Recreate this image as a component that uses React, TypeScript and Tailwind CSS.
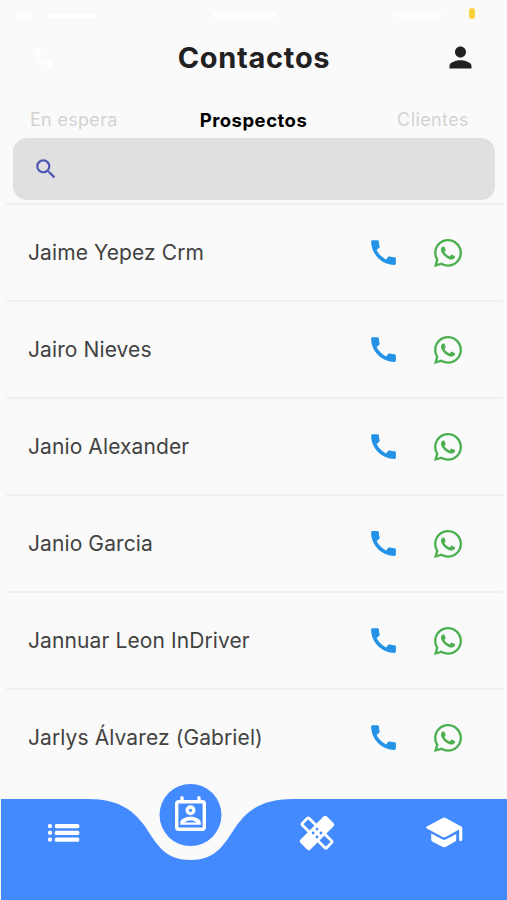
import { MdCall, MdPerson, MdSearch } from "react-icons/md";
import { FaWhatsapp } from "react-icons/fa";

const contacts = [
  "Jaime Yepez Crm",
  "Jairo Nieves",
  "Janio Alexander",
  "Janio Garcia",
  "Jannuar Leon InDriver",
  "Jarlys Álvarez (Gabriel)",
];

function StatusBar() {
  return (
    <div className="flex h-7 items-start justify-between pl-4 pr-8 pt-[8px]">
      <div className="flex items-center gap-4 pt-1">
        <div className="h-2 w-4 rounded-sm bg-white" />
        <div className="h-1 w-12 rounded-sm bg-white" />
      </div>
      <div className="mt-[5px] h-1 w-16 rounded-sm bg-white" />
      <div className="flex gap-7">
        <div className="mt-[5px] h-1 w-12 rounded-sm bg-white" />
        <div className="h-[11px] w-[6px] rounded-[3px] bg-[#f5d23c]" />
      </div>
    </div>
  );
}

function Header() {
  return (
    <header className="grid h-[59px] grid-cols-[1fr_auto_1fr] items-center">
      <MdCall size={24} className="ml-[32px] text-white" />
      <h1 className="pl-[1px] text-[29px] font-bold leading-none tracking-[0.7px] text-[#212121]">
        Contactos
      </h1>
      <MdPerson size={33} className="mr-[30px] justify-self-end text-[#212121]" />
    </header>
  );
}

function Tabs() {
  return (
    <div className="grid h-[51px] grid-cols-[1fr_auto_1fr] items-end pb-[6px] pl-[30px] pr-[38px] text-[18px] leading-6 text-[#d3d3d3]">
      <button className="text-left tracking-[0.3px]">En espera</button>
      <button className="pl-[8px] text-[18.5px] font-bold tracking-[0.5px] text-black">
        Prospectos
      </button>
      <button className="text-right tracking-[0.4px]">Clientes</button>
    </div>
  );
}

function ContactRow({ name }: { name: string }) {
  return (
    <li className="flex h-[97px] items-center border-t-2 border-[#f0f0f0] pl-[22px] pr-[39px]">
      <span className="flex-1 whitespace-nowrap text-[21px] tracking-[0.1px] text-[#424242]">
        {name}
      </span>
      <MdCall size={33} className="mr-8 text-[#2492e6]" />
      <FaWhatsapp size={32} className="text-[#4caf50]" />
    </li>
  );
}

function ListIcon() {
  return (
    <svg width="32" height="20" viewBox="0 0 32 20" fill="currentColor">
      <rect x="0" y="1" width="4" height="4" rx="1.5" />
      <rect x="0" y="7.8" width="4" height="4" rx="1.5" />
      <rect x="0" y="14.5" width="4" height="4" rx="1.5" />
      <rect x="6.8" y="1" width="24.5" height="4.3" rx="1.5" />
      <rect x="6.8" y="7.8" width="24.5" height="4.3" rx="1.5" />
      <rect x="6.8" y="14.5" width="24.5" height="4.3" rx="1.5" />
    </svg>
  );
}

function ContactsIcon() {
  return (
    <svg width="31" height="35" viewBox="0 0 31 35" fill="none" stroke="currentColor">
      <rect x="1.7" y="5.7" width="27.6" height="27.6" rx="2" strokeWidth="3.4" />
      <path d="M7 1.7V5M24 1.7V5" strokeWidth="3.4" strokeLinecap="round" />
      <circle cx="15.5" cy="14.3" r="3.3" strokeWidth="3.4" />
      <path
        d="M5.2 28.8V27C5.2 23.2 10 20.8 15.5 20.8S25.8 23.2 25.8 27V28.8Z"
        fill="currentColor"
        stroke="none"
      />
      <path d="M10 26.4C12 24 19 24 21 26.4Z" fill="#448aff" stroke="none" />
    </svg>
  );
}

function HealingIcon() {
  return (
    <svg width="36" height="36" viewBox="-18 -18 36 36">
      <g transform="rotate(45)">
        <rect
          x="-17.2"
          y="-4.8"
          width="34.4"
          height="9.6"
          rx="1.2"
          fill="none"
          stroke="currentColor"
          strokeWidth="2.8"
        />
        <rect x="-7" y="-18.6" width="14" height="37.2" rx="2.4" fill="currentColor" />
      </g>
      <g fill="#448aff">
        <circle cx="0" cy="-3.9" r="1.4" />
        <circle cx="0" cy="3.9" r="1.4" />
        <circle cx="-3.9" cy="0" r="1.4" />
        <circle cx="3.9" cy="0" r="1.4" />
      </g>
    </svg>
  );
}

function SchoolIcon() {
  return (
    <svg width="37" height="32" viewBox="0 0 37 32" fill="currentColor">
      <path d="M.9 9.5 16.7 1Q18.2.2 19.7 1L35.2 9.4Q36.3 10 36.3 11.2V22.6Q36.3 24.2 34.7 24.2T33.1 22.6V12.5L19.7 19.9Q18.2 20.7 16.7 19.9L.9 11.4Q-.7 10.4.9 9.5Z" />
      <path d="M5.2 16.4 16.6 22.6Q18.2 23.4 19.8 22.6L30.2 16.9V22.4Q30.2 24 28.8 24.8L19.5 30Q18.2 30.7 16.9 30L6.6 24.8Q5.2 24 5.2 22.4Z" />
    </svg>
  );
}

function BottomNav() {
  return (
    <nav className="relative h-[116px] shrink-0 text-white">
      <svg
        className="absolute inset-0"
        width="507"
        height="116"
        viewBox="0 0 507 116"
        fill="#448aff"
      >
        <path d="M1 15H88C121 15 134 28 144 41C156 58 163 76 190.5 76C218 76 225 58 237 41C247 28 260 15 293 15H507V116H1Z" />
        <circle cx="190.5" cy="31" r="31" />
      </svg>
      <div className="relative grid h-full grid-cols-4 items-start justify-items-center">
        <button className="ml-[2px] mt-[39px]">
          <ListIcon />
        </button>
        <button className="mt-[12px]">
          <ContactsIcon />
        </button>
        <button className="mt-[31px]">
          <HealingIcon />
        </button>
        <button className="ml-[2px] mt-[33px]">
          <SchoolIcon />
        </button>
      </div>
    </nav>
  );
}

export default function App() {
  return (
    <div className="flex h-[900px] w-[507px] flex-col overflow-hidden bg-[#fafafa] font-['Inter',sans-serif]">
      <StatusBar />
      <Header />
      <Tabs />
      <div className="ml-[13px] mr-[12px] flex h-[62px] shrink-0 items-center rounded-[14px] bg-[#e0e0e0] pl-[20px]">
        <MdSearch size={26} className="text-[#4d55b3]" />
      </div>
      <ul className="mt-[3px] ml-[6px] mr-[4px] min-h-0 flex-1">
        {contacts.map((name) => (
          <ContactRow key={name} name={name} />
        ))}
      </ul>
      <BottomNav />
    </div>
  );
}
